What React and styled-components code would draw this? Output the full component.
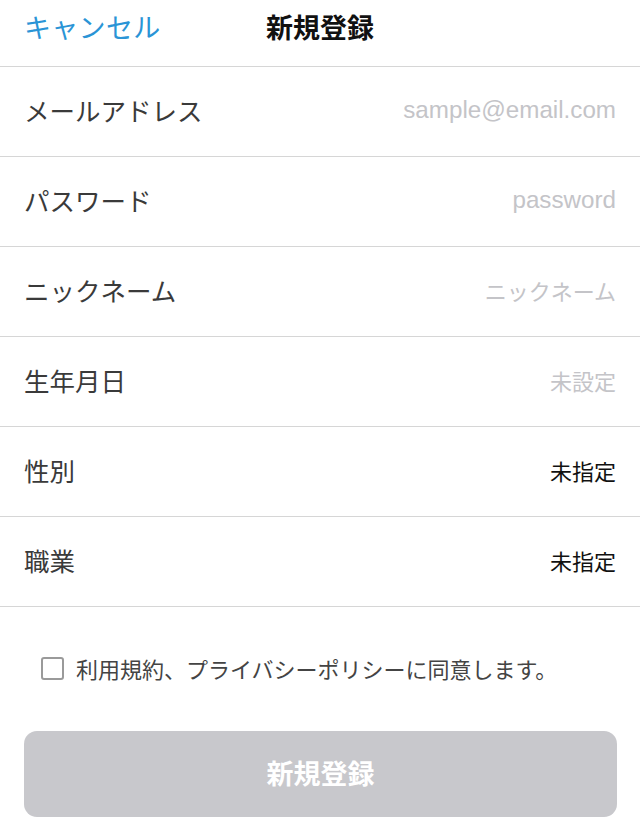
import React, { useState } from "react";
import styled, { createGlobalStyle } from "styled-components";

const Global = createGlobalStyle`
  html, body { margin: 0; padding: 0; background: #fff; }
  body { font-family: "Noto Sans CJK JP", "Noto Sans", sans-serif; }
  * { box-sizing: border-box; }
`;

const Page = styled.div`
  width: 640px;
  height: 829px;
  background: #fff;
  display: flex;
  flex-direction: column;
  overflow: hidden;
`;

const Header = styled.header`
  height: 67px;
  border-bottom: 1px solid #d6d6d6;
  display: grid;
  grid-template-columns: 1fr auto 1fr;
  align-items: center;
  padding: 0 24px 13px;
`;

const Cancel = styled.button`
  justify-self: start;
  background: none;
  border: none;
  padding: 0;
  font-family: inherit;
  font-size: 27px;
  color: #2a94d6;
  letter-spacing: 0.3px;
`;

const Title = styled.h1`
  margin: 0;
  font-size: 27px;
  font-weight: 700;
  color: #111;
`;

const Row = styled.div`
  height: 90px;
  border-bottom: 1px solid #d6d6d6;
  display: flex;
  align-items: center;
  justify-content: space-between;
  padding: 0 24px 4px;
`;

const Label = styled.span`
  font-size: 25.5px;
  color: #3a3a3a;
`;

const Value = styled.span`
  color: ${(p) => (p.$placeholder ? "#c4c4c8" : "#111")};
  font-family: ${(p) => (p.$latin ? '"Liberation Sans", "Noto Sans CJK JP", sans-serif' : "inherit")};
  font-size: ${(p) => (p.$latin ? "24.2px" : "22px")};
`;

const Agree = styled.label`
  display: flex;
  align-items: center;
  gap: 12px;
  margin: 38px 0 0 41px;
  height: 46px;
  font-size: 22px;
  color: #444;
`;

const Box = styled.span`
  width: 23px;
  height: 23px;
  border: 2px solid #9a9a9a;
  border-radius: 3px;
  background: ${(p) => (p.$checked ? "#2a94d6" : "#fff")};
`;

const Submit = styled.button`
  margin: 40px 23px 0 24px;
  height: 86px;
  border: none;
  border-radius: 13px;
  background: #c8c8cc;
  color: #fff;
  font-family: inherit;
  font-size: 27px;
  font-weight: 700;
  padding-bottom: 4px;
`;

const rows = [
  { label: "メールアドレス", value: "sample@email.com", placeholder: true, latin: true },
  { label: "パスワード", value: "password", placeholder: true, latin: true },
  { label: "ニックネーム", value: "ニックネーム", placeholder: true },
  { label: "生年月日", value: "未設定", placeholder: true },
  { label: "性別", value: "未指定" },
  { label: "職業", value: "未指定" },
];

export default function App() {
  const [checked, setChecked] = useState(false);
  return (
    <Page>
      <Global />
      <Header>
        <Cancel>キャンセル</Cancel>
        <Title>新規登録</Title>
        <span />
      </Header>
      {rows.map((r) => (
        <Row key={r.label}>
          <Label>{r.label}</Label>
          <Value $placeholder={r.placeholder} $latin={r.latin}>{r.value}</Value>
        </Row>
      ))}
      <Agree onClick={() => setChecked(!checked)}>
        <Box $checked={checked} />
        利用規約、プライバシーポリシーに同意します。
      </Agree>
      <Submit>新規登録</Submit>
    </Page>
  );
}
